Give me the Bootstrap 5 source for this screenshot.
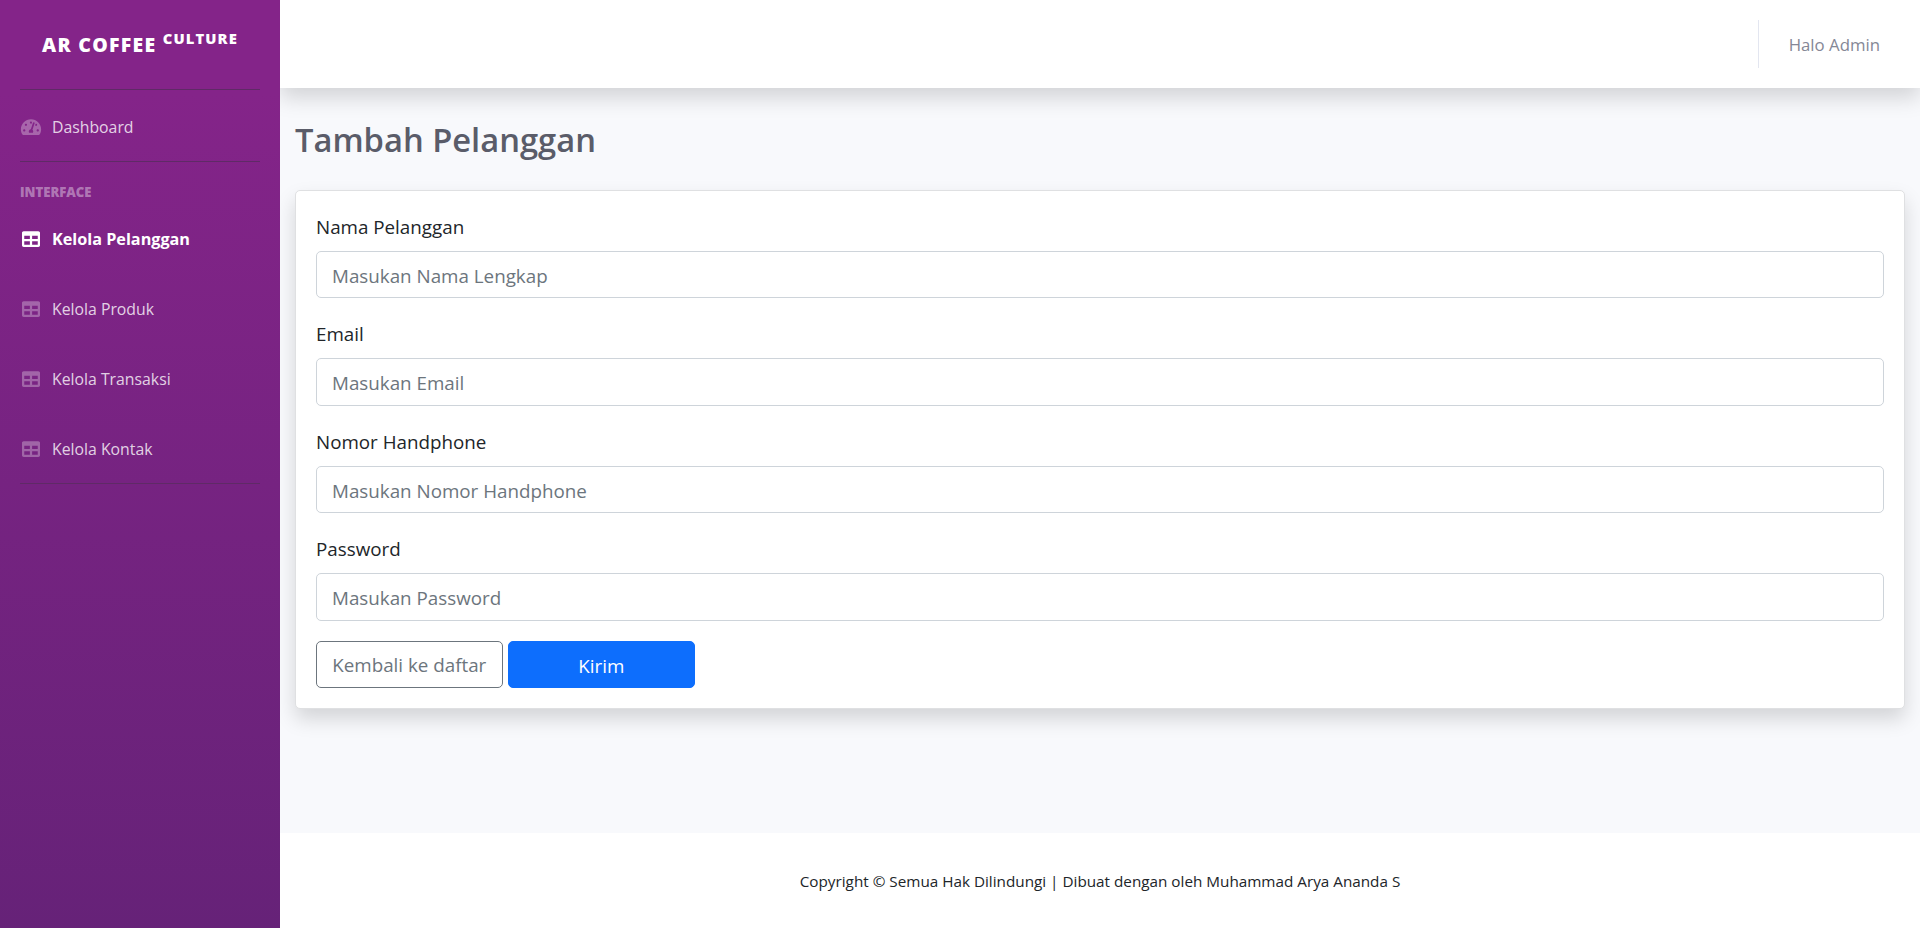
<!DOCTYPE html>
<html lang="id">
<head>
<meta charset="utf-8">
<meta name="viewport" content="width=device-width, initial-scale=1">
<title>Tambah Pelanggan</title>
<link href="https://cdn.jsdelivr.net/npm/bootstrap@5.3.0/dist/css/bootstrap.min.css" rel="stylesheet">
<style>
html{font-size:20px}
body{font-family:"Open Sans","Noto Sans",sans-serif;font-size:18.8px;line-height:30px;color:#212529;background:#fff;overflow:hidden}
.sidebar{width:280px;min-height:928px;background:linear-gradient(180deg,#842489 10%,#662278 100%)}
.brand{height:89px;padding-top:1px;font-weight:800;font-size:19.5px;letter-spacing:1.25px;color:#fff;text-decoration:none;white-space:nowrap}
.brand sup{font-size:14.8px;letter-spacing:1.1px;top:-.54em}
.rule{height:1px;background:#5f2a66;margin:0 20px}
.side-link{display:flex;align-items:center;height:70px;padding:2px 20px 0;font-size:15.8px;color:rgba(255,255,255,.8);text-decoration:none}
.side-link.dash{height:71px;padding-top:3px}
.side-link svg{width:22px;height:18px;margin-right:10px;opacity:.375;flex:none}
.side-link span{white-space:nowrap}
.side-link.active{color:#fff;font-weight:700;font-size:16.2px}
.side-link.active svg{opacity:1}
.side-head{font-size:13.1px;font-weight:800;color:rgba(255,255,255,.4);line-height:20px;padding:0 20px 1px}
.content{background:#f8f9fc;height:833px}
.topbar{height:88px;padding-right:40px;background:#fff}
.split{width:1px;height:48px;background:#e3e6f0}
.hello{color:#858796;font-size:16.8px;padding-top:1px}
.page-title{font-size:32.7px;font-weight:600;color:#5a5c69;line-height:42px;padding-top:31px;margin-bottom:28.5px}
.form-label{padding-top:1px;margin-bottom:9px;display:block}
.form-control,.btn{font-size:18.8px;height:47.5px;border-radius:5px;padding-top:8.5px;padding-bottom:6px}
.form-control{border-color:#ced4da}
.form-control::placeholder{color:#6c757d;opacity:1}
.card{border-radius:5px;border-color:#dfe0e2}
.btn{width:186.5px;padding-left:0;padding-right:0;line-height:30px;white-space:nowrap}
.btn-row{gap:5.5px}
.shadow{box-shadow:0 10px 20px rgba(0,0,0,.15)!important}
.foot{height:95px;font-size:15.27px;white-space:nowrap}
</style>
</head>
<body>
<div class="d-flex">
  <nav class="sidebar flex-shrink-0">
    <a class="brand d-flex align-items-center justify-content-center" href="#"><div>AR COFFEE <sup>CULTURE</sup></div></a>
    <div class="rule"></div>
    <a class="side-link dash" href="#"><svg viewBox="0 0 576 512" fill="currentColor"><path d="M288 32C128.900 32 0 160.900 0 320c0 52.800 14.300 102.300 39.100 144.800 5.600 9.600 16.300 15.200 27.400 15.200h443c11.100 0 21.800-5.600 27.400-15.200C561.800 422.300 576 372.800 576 320c0-159.100-128.900-288-288-288zm0 64c14.700 0 26.600 10.100 30.300 23.700-1.100 2.300-2.600 4.200-3.500 6.700l-9.200 27.700c-5.100 3.500-11 6-17.600 6-17.700 0-32-14.300-32-32S270.300 96 288 96zM96 384c-17.700 0-32-14.300-32-32s14.300-32 32-32 32 14.300 32 32-14.300 32-32 32zm48-160c-17.700 0-32-14.300-32-32s14.300-32 32-32 32 14.300 32 32-14.300 32-32 32zm246.800-72.400-61.300 184C343.100 347.300 352 364.500 352 384c0 11.700-3.400 22.600-8.900 32H232.900c-5.500-9.500-8.900-20.300-8.900-32 0-33.900 26.500-61.400 59.900-63.600l61.300-184c4.200-12.600 17.700-19.500 30.400-15.200 12.600 4.200 19.400 17.800 15.200 30.400zm14.700 57.200 15.500-46.600c3.500-1.300 7.100-2.200 11.100-2.200 17.700 0 32 14.300 32 32s-14.300 32-32 32c-11.400 0-20.900-6.300-26.600-15.200zM480 384c-17.700 0-32-14.300-32-32s14.300-32 32-32 32 14.300 32 32-14.300 32-32 32z"/></svg><span>Dashboard</span></a>
    <div class="rule mb-3"></div>
    <div class="side-head">INTERFACE</div>
    <a class="side-link active" href="#"><svg viewBox="0 0 512 512" fill="currentColor"><path d="M464 32H48C21.500 32 0 53.500 0 80v352c0 26.500 21.500 48 48 48h416c26.500 0 48-21.500 48-48V80c0-26.500-21.500-48-48-48zM224 416H64v-96h160v96zm0-160H64v-96h160v96zm224 160H288v-96h160v96zm0-160H288v-96h160v96z"/></svg><span>Kelola Pelanggan</span></a>
    <a class="side-link" href="#"><svg viewBox="0 0 512 512" fill="currentColor"><path d="M464 32H48C21.500 32 0 53.500 0 80v352c0 26.500 21.500 48 48 48h416c26.500 0 48-21.500 48-48V80c0-26.500-21.500-48-48-48zM224 416H64v-96h160v96zm0-160H64v-96h160v96zm224 160H288v-96h160v96zm0-160H288v-96h160v96z"/></svg><span>Kelola Produk</span></a>
    <a class="side-link" href="#"><svg viewBox="0 0 512 512" fill="currentColor"><path d="M464 32H48C21.500 32 0 53.500 0 80v352c0 26.500 21.500 48 48 48h416c26.500 0 48-21.500 48-48V80c0-26.500-21.500-48-48-48zM224 416H64v-96h160v96zm0-160H64v-96h160v96zm224 160H288v-96h160v96zm0-160H288v-96h160v96z"/></svg><span>Kelola Transaksi</span></a>
    <a class="side-link" href="#"><svg viewBox="0 0 512 512" fill="currentColor"><path d="M464 32H48C21.500 32 0 53.500 0 80v352c0 26.500 21.500 48 48 48h416c26.500 0 48-21.500 48-48V80c0-26.500-21.500-48-48-48zM224 416H64v-96h160v96zm0-160H64v-96h160v96zm224 160H288v-96h160v96zm0-160H288v-96h160v96z"/></svg><span>Kelola Kontak</span></a>
    <div class="rule"></div>
  </nav>
  <div class="flex-grow-1 d-flex flex-column overflow-hidden">
    <main class="content">
      <header class="topbar shadow d-flex align-items-center justify-content-end">
        <div class="split"></div>
        <div class="hello ps-4">Halo Admin</div>
      </header>
      <div class="container-fluid">
        <h1 class="page-title">Tambah Pelanggan</h1>
        <div class="card shadow">
          <form class="card-body">
            <div class="mb-3"><label class="form-label" for="nama">Nama Pelanggan</label><input id="nama" class="form-control" type="text" placeholder="Masukan Nama Lengkap"></div>
            <div class="mb-3"><label class="form-label" for="email">Email</label><input id="email" class="form-control" type="email" placeholder="Masukan Email"></div>
            <div class="mb-3"><label class="form-label" for="hp">Nomor Handphone</label><input id="hp" class="form-control" type="text" placeholder="Masukan Nomor Handphone"></div>
            <div class="mb-3"><label class="form-label" for="pass">Password</label><input id="pass" class="form-control" type="password" placeholder="Masukan Password"></div>
            <div class="btn-row d-flex"><a class="btn btn-outline-secondary" href="#">Kembali ke daftar</a><button class="btn btn-primary" type="button">Kirim</button></div>
          </form>
        </div>
      </div>
    </main>
    <footer class="foot bg-white d-flex align-items-center justify-content-center">Copyright © Semua Hak Dilindungi | Dibuat dengan oleh Muhammad Arya Ananda S</footer>
  </div>
</div>
<script src="https://cdn.jsdelivr.net/npm/bootstrap@5.3.0/dist/js/bootstrap.bundle.min.js"></script>
</body>
</html>
